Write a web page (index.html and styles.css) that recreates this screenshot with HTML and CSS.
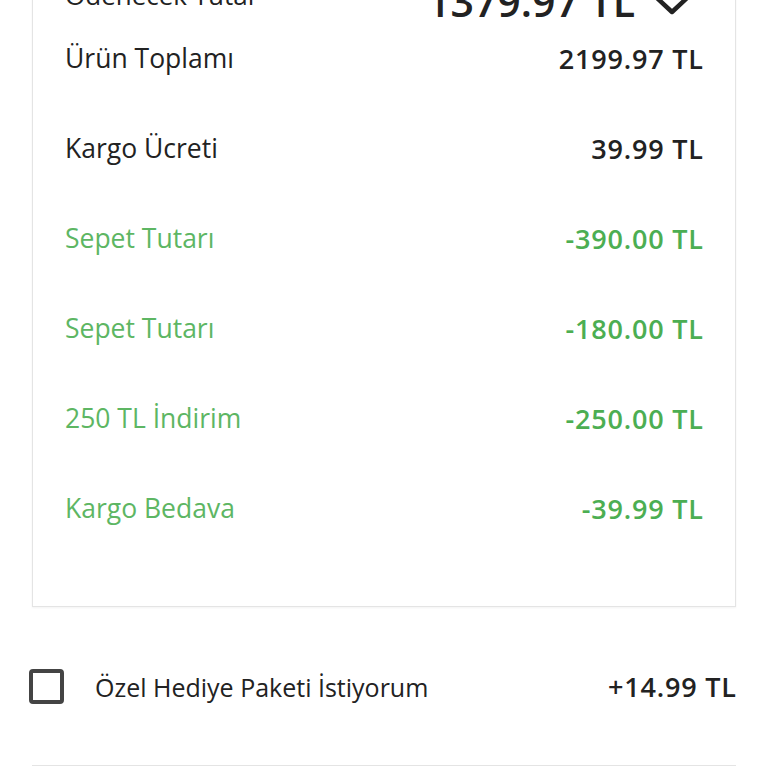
FILE: index.html
```html
<!DOCTYPE html>
<html lang="tr">
<head>
<meta charset="utf-8">
<link rel="stylesheet" href="styles.css">
</head>
<body>
<div class="page">
  <div class="card">
    <div class="head">
      <span class="head-label">Ödenecek Tutar</span>
      <div class="head-right">
        <span class="head-total">1379.97 TL</span>
        <svg class="chev" width="38" height="22" viewBox="0 0 38 22"><polyline points="4,4 19,18 34,4" fill="none" stroke="#222" stroke-width="4.5" stroke-linecap="round" stroke-linejoin="round"/></svg>
      </div>
    </div>
    <div class="row first"><span class="label">Ürün Toplamı</span><span class="value">2199.97 TL</span></div>
    <div class="row"><span class="label">Kargo Ücreti</span><span class="value">39.99 TL</span></div>
    <div class="row green"><span class="label">Sepet Tutarı</span><span class="value">-390.00 TL</span></div>
    <div class="row green"><span class="label">Sepet Tutarı</span><span class="value">-180.00 TL</span></div>
    <div class="row green"><span class="label">250 TL İndirim</span><span class="value">-250.00 TL</span></div>
    <div class="row green"><span class="label">Kargo Bedava</span><span class="value">-39.99 TL</span></div>
  </div>
  <div class="gift">
    <span class="box"></span>
    <span class="gift-label">Özel Hediye Paketi İstiyorum</span>
    <span class="gift-price">+14.99 TL</span>
  </div>
  <div class="divider"></div>
</div>
</body>
</html>
```
FILE: styles.css
```css
html, body {
  margin: 0;
  padding: 0;
  background: #fff;
}
body {
  font-family: "Open Sans", "Noto Sans", sans-serif;
  color: #222;
  overflow: hidden;
}
.page {
  padding: 0 32px;
}
.card {
  margin-top: -36px;
  border: 1px solid #e4e4e4;
  padding: 0 32px 78px;
  box-shadow: 0 1px 2px rgba(0,0,0,0.05);
}
.head {
  height: 55px;
  display: flex;
  justify-content: space-between;
  align-items: flex-end;
}
.head-label {
  font-size: 26px;
  line-height: 26px;
  margin-bottom: 12px;
}
.head-right {
  display: flex;
  align-items: flex-end;
}
.head-total {
  font-size: 41px;
  line-height: 38px;
  font-weight: 600;
}
.chev {
  margin-left: 18px;
  margin-right: 12px;
  margin-bottom: 4px;
}
.row {
  height: 40px;
  margin-top: 50px;
  display: flex;
  justify-content: space-between;
  align-items: center;
  font-size: 26.5px;
}
.row.first {
  margin-top: 18px;
}
.value {
  font-weight: 600;
  font-size: 27px;
  letter-spacing: 0.8px;
  margin-right: -0.8px;
}
.row.green .label {
  color: #5db663;
}
.row.green .value {
  color: #4cae52;
}
.gift {
  margin-top: 62px;
  display: flex;
  align-items: center;
  height: 35px;
}
.box {
  width: 27px;
  height: 27px;
  border: 4px solid #444;
  border-radius: 4px;
  margin-left: -3px;
}
.gift-label {
  margin-left: 31px;
  font-size: 25px;
  flex: 1;
}
.gift-price {
  font-size: 27px;
  font-weight: 600;
  letter-spacing: 0.8px;
  margin-right: -0.8px;
}
.divider {
  margin-top: 61px;
  height: 1px;
  background: #e4e4e4;
}
```
